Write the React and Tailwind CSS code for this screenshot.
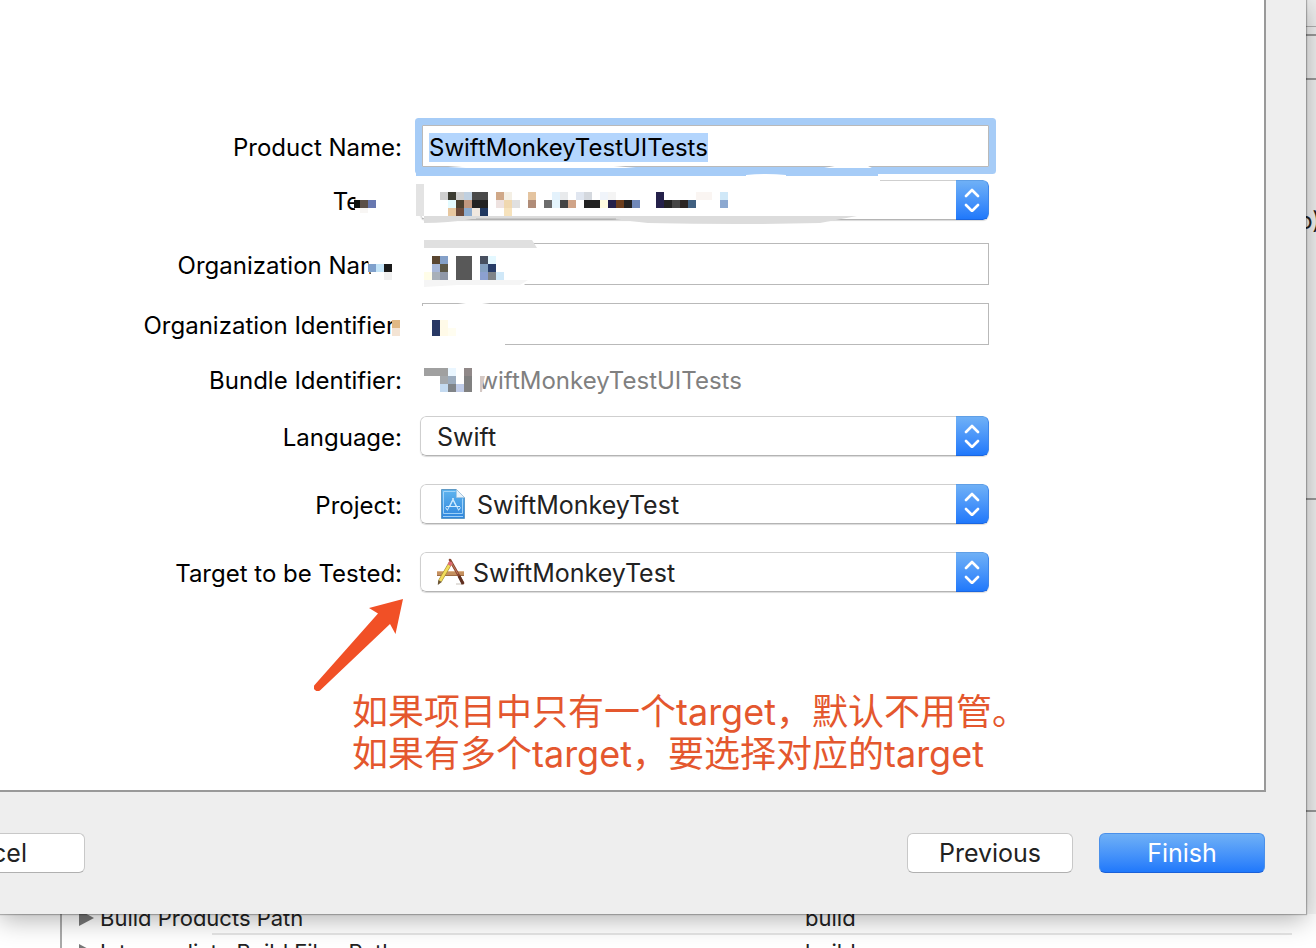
import { useEffect, useRef } from 'react';
import clsx from 'clsx';

// [x, y, width, height, colour]
const mosaic = [
    // labels
    [354, 200, 7, 8, '#0e1410'], [360, 200, 8, 8, '#5c5048'], [368, 200, 8, 8, '#6878b0'], [360, 208, 8, 5, '#f8f6f4'],
    [368, 264, 8, 8, '#7fa0cc'], [376, 264, 8, 8, '#c4e4f8'], [384, 264, 8, 8, '#1a1a1a'], [384, 272, 8, 8, '#f0f0f0'],
    [392, 320, 8, 8, '#e0b884'], [392, 328, 8, 8, '#f4e4d4'],
    // team
    [416, 184, 8, 32, '#e3e3e3'],
    [440, 192, 8, 8, '#cfcfcf'], [448, 192, 8, 8, '#3c3c32'], [456, 192, 8, 8, '#cfcfcf'], [464, 192, 8, 8, '#c0d0e0'],
    [472, 192, 16, 8, '#4a4a4a'], [496, 192, 8, 8, '#d0a888'], [504, 192, 8, 8, '#f4efe4'], [528, 192, 8, 8, '#e4c4a0'],
    [552, 192, 8, 8, '#e4f2fc'], [560, 192, 8, 8, '#e8eaec'], [576, 192, 8, 8, '#e0e6f0'], [584, 192, 8, 8, '#d4d8de'],
    [600, 192, 8, 8, '#f0f4fa'], [608, 192, 8, 8, '#f4f4f4'], [656, 192, 8, 8, '#24204a'], [696, 192, 16, 8, '#faf5f2'],
    [720, 192, 8, 8, '#d0e8f8'],
    [448, 200, 8, 8, '#e4fbff'], [456, 200, 8, 8, '#4a4030'], [464, 200, 8, 8, '#c09880'], [472, 200, 16, 8, '#222222'],
    [496, 200, 8, 8, '#eee2e0'], [504, 200, 8, 8, '#f0d8b0'], [512, 200, 8, 8, '#e0e0e0'], [528, 200, 8, 8, '#b08c78'],
    [544, 200, 8, 8, '#6c6c6c'], [552, 200, 8, 8, '#e4f4fc'], [560, 200, 8, 8, '#444444'], [568, 200, 8, 8, '#d0a488'],
    [584, 200, 16, 8, '#222222'], [600, 200, 8, 8, '#fffbe0'], [608, 200, 8, 8, '#24204a'], [616, 200, 8, 8, '#6b3d1c'],
    [624, 200, 8, 8, '#222222'], [632, 200, 8, 8, '#7088b8'], [656, 200, 8, 8, '#24204a'], [664, 200, 8, 8, '#222222'],
    [672, 200, 8, 8, '#444444'], [680, 200, 8, 8, '#2a2422'], [688, 200, 8, 8, '#406080'], [720, 200, 8, 8, '#8ca8d0'],
    [448, 208, 8, 8, '#e8c8a0'], [456, 208, 8, 8, '#6c4a3a'], [464, 208, 8, 8, '#8cacd0'], [472, 208, 8, 8, '#f0e8e0'],
    [480, 208, 8, 8, '#203860'], [504, 208, 8, 8, '#f6e2bc'],
    // organization name
    [432, 256, 8, 8, '#5a4630'], [440, 256, 8, 8, '#84a0c8'], [432, 264, 8, 8, '#a8b8d8'], [440, 264, 8, 8, '#5c5848'],
    [424, 272, 8, 8, '#fffde8'], [432, 272, 8, 8, '#a8b0b8'], [440, 272, 8, 8, '#9098a8'], [456, 256, 16, 24, '#585858'],
    [480, 256, 8, 8, '#485060'], [488, 256, 8, 8, '#e4f8ff'], [480, 264, 8, 8, '#84a0c0'], [488, 264, 8, 8, '#283c68'],
    [480, 272, 8, 8, '#8ca0d0'], [488, 272, 8, 8, '#808488'], [496, 272, 8, 8, '#d0e8f8'],
    // organization identifier
    [432, 320, 8, 16, '#283864'], [440, 320, 8, 16, '#fffae8'], [448, 328, 8, 8, '#fffdf0'],
    // bundle identifier
    [424, 368, 24, 8, '#a0a0a0'], [448, 368, 8, 8, '#eaf6ff'], [464, 368, 8, 8, '#908888'],
    [440, 376, 8, 8, '#a4a8ac'], [448, 376, 8, 8, '#9cacbe'], [464, 376, 8, 8, '#808080'],
    [440, 384, 8, 8, '#c4daf0'], [448, 384, 8, 8, '#808488'], [456, 384, 8, 8, '#c0cce8'], [464, 384, 8, 8, '#808080'],
];

const Redaction = () => (
    <svg
        className="absolute left-[336px] top-[110px] w-[560px] h-[300px] pointer-events-none"
        viewBox="336 110 560 300"
        aria-hidden="true"
    >
        {/* Wiped areas */}
        <g fill="#fff">
            <path d="M357 190h52v26h-52l-3-10z" />
            <path d="M366 250h44v30h-38z" />
            <path d="M396 310h14v30h-19l1-10z" />
            <path d="M416 177h464v7h-24v32h-440z" />
            <path d="M418 238h117l-4 10v30l-10 10h-103z" />
            <path d="M418 306h34v42h-34z" />
            <path d="M452 340h53v8h-53z" />
            <path d="M458 304q16-3 32 0v2h-32z" />
            <path d="M420 364h66l-6 30h-60z" />
            <path d="M448 167q22-2 40-2h110q20 1 38 3h-170z" />
            <path d="M824 168q12-3 24-3h18l6 3z" />
        </g>
        {/* Smeared edges */}
        <path d="M416 168h456l6 4v4h-462z" fill="#a6ccf7" />
        <path d="M746 175q20-2 40 0v2h-40z" fill="#fff" />
        <path d="M424 216h433l-37 7q-80 2-172 0l-36-4h-140q-24 4-48 4z" fill="#dcdcdc" />
        <path d="M476 219h140" stroke="#b0b0b0" />
        <path d="M424 240h108l5 8h-113z" fill="#e0e0e0" />
        <path d="M424 280h104l-8 5h-62l-34 2z" fill="#f5f5f5" />
        <path d="M480 376h5l-2 8-1 8h-2z" fill="#d4c8c4" />
        <g shapeRendering="crispEdges">
            {mosaic.map(([x, y, w, h, fill]) => (
                <rect key={`${x}-${y}`} x={x} y={y} width={w} height={h} fill={fill} />
            ))}
        </g>
    </svg>
);

const ProjectIcon = () => (
    <svg className="absolute left-[21px] top-[5px] w-6 h-[30px]" viewBox="0 0 24 30" aria-hidden="true">
        <defs>
            <linearGradient id="doc" x1="0" y1="0" x2="0" y2="1">
                <stop offset="0" stopColor="#5fb4ee" />
                <stop offset="1" stopColor="#2f86dd" />
            </linearGradient>
        </defs>
        <path d="M.5.5h15l8 8v21H.5z" fill="url(#doc)" stroke="#5f9ac6" />
        <path d="M2.500 2.500h12M2.500 2.500v22h19v-15M2 27.500h20" fill="none" stroke="#a9d8fa" strokeWidth=".9" />
        <path d="M15.500.5v8h8z" fill="#e9f3fb" stroke="#a9c6dc" strokeWidth=".6" />
        <path d="M12.500 9l-6 12M11.500 9l6 12M5 17.500h14M4.500 18.500l2 3M19.500 18.500l-2 3M9 17l3-6 3 6" fill="none" stroke="#d4edff" strokeWidth="1" />
    </svg>
);

const AppIcon = () => (
    <svg className="absolute left-[17px] top-[6px] w-7 h-7" viewBox="0 0 28 28" aria-hidden="true">
        <path d="M0 13h27v5H0z" fill="#c4905f" />
        <path d="M0 13.500h27" stroke="#dcb288" strokeWidth="1" />
        <path d="M0 17.500h27" stroke="#a06c42" strokeWidth="1" />
        <path d="M19 26h8" stroke="#e2dfdb" strokeWidth="2" />
        <path d="M13 2l13 23" stroke="#8a4630" strokeWidth="2.600" strokeLinecap="round" />
        <path d="M14 4l7 12" stroke="#c07a5c" strokeWidth="1" />
        <path d="M22 18l4 8" stroke="#5e3022" strokeWidth="2.800" />
        <path d="M13.500 5L3 23" stroke="#a08c30" strokeWidth="3.800" />
        <path d="M13.500 5L3 23" stroke="#f2dc5c" strokeWidth="2.600" />
        <path d="M14 4l-1.800 3.200" stroke="#dd6a74" strokeWidth="3.800" />
        <path d="M1.200 22l-.4 5 4-3z" fill="#6b5433" />
    </svg>
);

const Row = ({ id, label, className, children }) => (
    <div className={clsx('grid grid-cols-[402px_1fr] gap-x-[18px] items-center', className)}>
        <label htmlFor={id} className="pt-[3px] text-right whitespace-nowrap">{label}</label>
        {children}
    </div>
);

const Popup = ({ id, value, icon, pad = 'pl-4' }) => (
    <div className="relative h-10 flex rounded-md overflow-hidden shadow-[0_1px_1px_rgba(0,0,0,0.15)]">
        <select
            id={id}
            defaultValue={value}
            className={clsx('appearance-none flex-1 min-w-0 pt-[2px] bg-white border border-r-0 border-[#cfcfcf] border-b-[#b4b4b4] rounded-l-md text-[25px] text-[#222] outline-none', pad)}
        >
            <option value={value}>{value}</option>
        </select>
        {icon}
        <div className="w-[33px] flex items-center justify-center bg-linear-to-b from-[#6fb0f6] to-[#1f78fb] border border-l-0 border-t-[#5f9fe6] border-r-[#3f86e8] border-b-[#1a66e0] rounded-r-md pointer-events-none">
            <svg className="w-4 h-6" viewBox="0 0 16 24" fill="none" stroke="#fff" strokeWidth="2.600" strokeLinecap="round" strokeLinejoin="round" aria-hidden="true">
                <path d="M2 8l6-6 6 6M2 17l6 6 6-6" />
            </svg>
        </div>
    </div>
);

const fieldClass = 'ml-[2px] h-[42px] min-w-0 bg-white border border-[#b9b9b9] outline-none px-[6px] pt-[2px]';
const buttonClass = 'h-10 rounded-md border text-[25px] leading-none';
const plainButton = 'bg-white border-[#c8c8c8] border-b-[#b0b0b0] text-[#222]';

const TargetForm = () => {
    const nameRef = useRef(null);

    useEffect(() => {
        nameRef.current.focus();
        nameRef.current.select();
    }, []);

    return (
        <form className="relative pt-[125px] pr-[275px] text-[24px] leading-8 text-black">
            <Row id="product" label="Product Name:">
                <input
                    id="product"
                    ref={nameRef}
                    defaultValue="SwiftMonkeyTestUITests"
                    className={clsx(fieldClass, 'shadow-[0_0_0_7px_#a6ccf7] rounded-[1px] selection:bg-[#b3d5fd] selection:text-black')}
                />
            </Row>
            <Row id="team" label="Team:" className="mt-[13px]">
                <Popup id="team" value="" />
            </Row>
            <Row id="org" label="Organization Name:" className="mt-[23px]">
                <input id="org" className={fieldClass} />
            </Row>
            <Row id="orgid" label="Organization Identifier:" className="mt-[18px]">
                <input id="orgid" className={fieldClass} />
            </Row>
            <Row id="bundle" label="Bundle Identifier:" className="mt-[17px]">
                <output id="bundle" className="pt-[3px] pl-[43px] text-[#808080]">SwiftMonkeyTestUITests</output>
            </Row>
            <Row id="language" label="Language:" className="mt-[19px]">
                <Popup id="language" value="Swift" />
            </Row>
            <Row id="project" label="Project:" className="mt-7">
                <Popup id="project" value="SwiftMonkeyTest" icon={<ProjectIcon />} pad="pl-[56px]" />
            </Row>
            <Row id="target" label="Target to be Tested:" className="mt-7">
                <Popup id="target" value="SwiftMonkeyTest" icon={<AppIcon />} pad="pl-[52px]" />
            </Row>
            <Redaction />
        </form>
    );
};

const Note = () => (
    <div className="pt-[7px] text-[#e4572e]">
        <svg className="block ml-[314px] w-[90px] h-[92px]" viewBox="0 0 90 92" aria-hidden="true">
            <path d="M89 0L55 9l9 5.500L1 85.500a3.800 3.800 0 0 0 5.500 5.500L76 25l5.500 10z" fill="#f15026" />
        </svg>
        <p className="ml-[352px] text-[36px] leading-[42px] whitespace-nowrap">
            如果项目中只有一个target，默认不用管。<br />
            如果有多个target，要选择对应的target
        </p>
    </div>
);

const rows = [
    { name: 'Build Products Path', value: 'build' },
    { name: 'Intermediate Build Files Path', value: 'build' },
];

export default function App() {
    return (
        <div className="h-screen overflow-hidden flex flex-col bg-white font-['Inter','Noto_Sans_CJK_SC',sans-serif]">
            <div className="flex shrink-0">
                {/* Sheet */}
                <main className="relative z-10 flex-1 min-w-0 flex flex-col bg-[#eeeeee] shadow-[0_0_1px_1px_rgba(0,0,0,0.25),0_6px_24px_rgba(0,0,0,0.3)]">
                    <section className="mr-10 h-[792px] bg-white border-r-2 border-b-2 border-[#999999]">
                        <TargetForm />
                        <Note />
                    </section>
                    <footer className="flex items-start py-[41px] pr-[41px]">
                        <button className={clsx(buttonClass, plainButton, 'w-[198px] -ml-[113px]')}>Cancel</button>
                        <button className={clsx(buttonClass, plainButton, 'w-[166px] ml-auto')}>Previous</button>
                        <button className={clsx(buttonClass, 'w-[166px] ml-[26px] bg-linear-to-b from-[#6fb0f6] to-[#1f78fb] border-[#4a90ea] border-b-[#1a60d8] text-white')}>Finish</button>
                    </footer>
                </main>

                {/* Edge of the window behind */}
                <aside className="w-[10px] flex flex-col bg-[#eeeeee] text-[24px] leading-8 text-[#222] overflow-hidden">
                    <div className="h-[27px] border-b border-[#b0b0b0]" />
                    <div className="h-[9px] border-b-2 border-[#999999]" />
                    <div className="h-[44px] border-b-2 border-[#999999]" />
                    <div className="h-[420px] pt-[125px] border-b-2 border-[#999999] flex justify-end items-start">
                        <span className="-mr-[5px]">o)</span>
                    </div>
                    <div className="h-[312px] border-b-2 border-[#999999]" />
                    <div className="flex-1 bg-[#f4f4f4]" />
                </aside>
            </div>

            {/* Build settings behind the sheet */}
            <div className="-mt-[12px] ml-[60px] border-l-2 border-[#aaaaaa] text-[#222]">
                <table className="w-full table-fixed text-[22px] leading-[30px]">
                    <tbody>
                        {rows.map((row) => (
                            <tr key={row.name} className="h-[34px] align-top">
                                <td className="w-[743px] p-0 pt-px whitespace-nowrap">
                                    <span className="inline-block w-[38px] pl-[17px] text-[#777]">
                                        <svg className="w-4 h-4" viewBox="0 0 16 16" aria-hidden="true">
                                            <path d="M0 0l15 8-15 8z" fill="currentColor" />
                                        </svg>
                                    </span>
                                    {row.name}
                                    <div className="ml-[150px] h-[2px] bg-[#e6e6e6]" />
                                </td>
                                <td className="p-0 pt-px">
                                    {row.value}
                                    <div className="mr-6 h-[2px] bg-[#e6e6e6]" />
                                </td>
                            </tr>
                        ))}
                    </tbody>
                </table>
            </div>
        </div>
    );
}
